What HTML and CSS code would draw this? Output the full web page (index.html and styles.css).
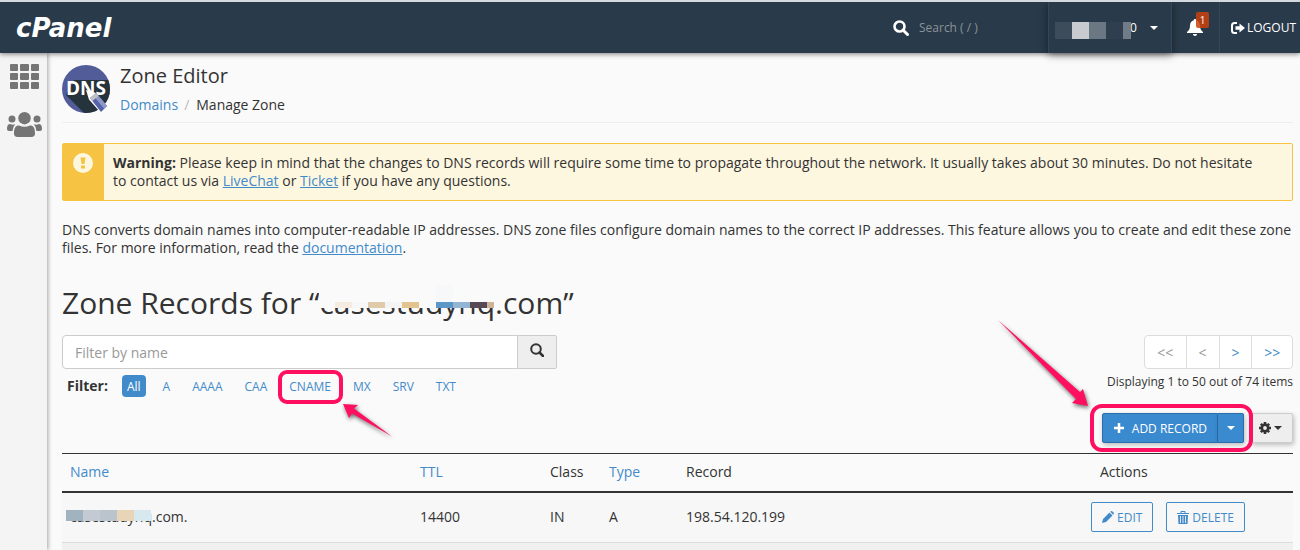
FILE: index.html
```html
<!DOCTYPE html>
<html lang="en">

<head>
    <meta charset="utf-8">
    <title>cPanel - Zone Editor</title>
    <link rel="stylesheet" href="styles.css">
</head>

<body>
    <header class="topbar">
        <a class="logo" href="#">cPanel</a>
        <label class="quick-search">
            <svg width="16" height="16" viewBox="0 0 16 16" aria-label="Search"><circle cx="6.5" cy="6.5" r="5" fill="none" stroke="#fff" stroke-width="2.6"/><path d="M10 10l4.500 4.500" stroke="#fff" stroke-width="3" stroke-linecap="round"/></svg>
            <input type="text" placeholder="Search ( / )">
        </label>
        <button class="user-menu" type="button">
            <span class="user-name"><span class="user-mask"><i></i><i></i><i></i><i></i><i></i></span></span><span>0</span>
            <i class="caret"></i>
        </button>
        <a class="bell" href="#" aria-label="Notifications">
            <svg width="16" height="17" viewBox="0 0 16 17" fill="#fff"><path d="M8 0c.8 0 1.200.5 1.200 1.200C11.800 1.800 13 4 13 6.500c0 3.500 1 5 3 6.500v1H0v-1c2-1.500 3-3 3-6.500C3 4 4.200 1.800 6.800 1.200 6.800.5 7.200 0 8 0z"/><path d="M6 15h4c0 1-.9 2-2 2s-2-1-2-2z"/></svg>
            <span class="badge">1</span>
        </a>
        <a class="logout" href="#">
            <svg width="14" height="12" viewBox="0 0 14 12"><path d="M6 1H3.500Q1 1 1 3.500v5Q1 11 3.500 11H6" fill="none" stroke="#fff" stroke-width="2"/><path d="M4.500 4.300H8.500V1.500L14 6 8.500 10.500V7.700H4.500z" fill="#fff"/></svg>
            LOGOUT
        </a>
    </header>

    <div class="page">
        <nav class="sidebar">
            <a href="#" aria-label="Home">
                <svg width="29" height="25" viewBox="0 0 29 25" fill="#757575"><rect width="8" height="7" rx="1"/><rect x="10" width="9" height="7" rx="1"/><rect x="21" width="8" height="7" rx="1"/><rect y="9" width="8" height="7" rx="1"/><rect x="10" y="9" width="9" height="7" rx="1"/><rect x="21" y="9" width="8" height="7" rx="1"/><rect y="18" width="8" height="7" rx="1"/><rect x="10" y="18" width="9" height="7" rx="1"/><rect x="21" y="18" width="8" height="7" rx="1"/></svg>
            </a>
            <a href="#" aria-label="User Manager">
                <svg width="35" height="25" viewBox="0 0 35 25" fill="#757575"><circle cx="17.500" cy="6.200" r="6.200"/><circle cx="5" cy="7" r="3.500"/><circle cx="30" cy="7" r="3.500"/><path d="M7 21.500C7 16 8.500 13.500 12 13.500q5.500 2.500 11 0c3.500 0 5 2.500 5 8 0 2.200-1.200 3.500-3.500 3.500h-14C8.200 25 7 23.700 7 21.500z"/><path d="M0 17c0-3.500 1-5 3.200-5q2.300 1.200 5 .3Q5.800 15 5.500 19H2Q0 19 0 17zM35 17c0-3.500-1-5-3.200-5q-2.300 1.200-5 .3Q29.200 15 29.500 19H33q2 0 2-2z"/></svg>
            </a>
        </nav>

        <main class="content">
            <div class="page-header">
                <svg class="app-icon" width="48" height="48" viewBox="0 0 48 48">
                    <clipPath id="disc"><circle cx="24" cy="24" r="24"/></clipPath>
                    <g clip-path="url(#disc)">
                        <rect width="48" height="48" fill="#515c99"/>
                        <path d="M4 30L12 15h36v33H22z" fill="#25333c"/>
                    </g>
                    <text x="24" y="30" text-anchor="middle" class="app-icon-text">DNS</text>
                    <path d="M24 25l10 3 11 13-7 6-11-12.500z" fill="#fff"/>
                    <path d="M28 33l6-5 11 13-6 6z" fill="#5662a8"/>
                    <path d="M31 30.500l3-2.500 11 13-3 2.500z" fill="#8d97cb"/>
                    <path d="M28 33l6-5 2.500 3-6 5z" fill="#bfc1c3"/>
                </svg>
                <div>
                    <h1>Zone Editor</h1>
                    <div class="breadcrumb"><a href="#">Domains</a><span>/</span>Manage Zone</div>
                </div>
            </div>

            <div class="alert">
                <div class="alert-icon">
                    <svg width="20" height="20" viewBox="0 0 20 20"><circle cx="10" cy="10" r="10" fill="#fef7e0"/><path d="M7.500 4.500h5l-1 6.500H8.500zM8 12.500h4v3H8z" fill="#f6c342"/></svg>
                </div>
                <p><strong>Warning:</strong> Please keep in mind that the changes to DNS records will require some time to propagate throughout the network. It usually takes about 30 minutes. Do not hesitate to contact us via <a href="#">LiveChat</a> or <a href="#">Ticket</a> if you have any questions.</p>
            </div>

            <p class="intro">DNS converts domain names into computer-readable IP addresses. DNS zone files configure domain names to the correct IP addresses. This feature allows you to create and edit these zone files. For more information, read the <a href="#">documentation</a>.</p>

            <h2>Zone Records for “<span class="masked">casestudyhq<svg class="title-mask" width="176" height="23" viewBox="0 0 176 23" aria-hidden="true"><rect width="176" height="23" fill="#fafafa"/><rect x="16" y="17" width="17" height="6" fill="#f5ebe0"/><rect x="33" y="17" width="16" height="6" fill="#f7f7f7"/><rect x="49" y="17" width="17" height="6" fill="#dfcbaa"/><rect x="66" y="17" width="17" height="6" fill="#f4f4f4"/><rect x="83" y="17" width="17" height="6" fill="#e3c48f"/><rect x="117" width="17" height="17" fill="#f6f8fa"/><rect x="117" y="17" width="17" height="6" fill="#5b97c7"/><rect x="134" y="17" width="17" height="6" fill="#92b5d3"/><rect x="151" y="17" width="17" height="6" fill="#584a55"/><rect x="168" y="17" width="7" height="6" fill="#ceb398"/></svg></span>.com”</h2>

            <div class="toolbar">
                <div>
                    <div class="search-group">
                        <input type="text" placeholder="Filter by name" aria-label="Filter by name">
                        <button type="button" aria-label="Search">
                            <svg width="14" height="14" viewBox="0 0 14 14" fill="none" stroke="#333"><circle cx="6" cy="6" r="4.800" stroke-width="2"/><path d="M9.500 9.500l3.500 3.500" stroke-width="2.500" stroke-linecap="round"/></svg>
                        </button>
                    </div>
                    <div class="filters">
                        <strong>Filter:</strong>
                        <button type="button" class="active">All</button>
                        <button type="button">A</button>
                        <button type="button">AAAA</button>
                        <button type="button">CAA</button>
                        <button type="button" class="marked">CNAME
                            <svg class="arrow-small" width="54" height="40" viewBox="0 0 54 40"><path d="M1 1l15 1-4 3.500L50 33.500 10 10.500 7 15z" fill="#ff0f5f"/></svg>
                        </button>
                        <button type="button">MX</button>
                        <button type="button">SRV</button>
                        <button type="button">TXT</button>
                    </div>
                </div>
                <div class="paging">
                    <div class="pager">
                        <button type="button" disabled>&lt;&lt;</button>
                        <button type="button" disabled>&lt;</button>
                        <button type="button">&gt;</button>
                        <button type="button">&gt;&gt;</button>
                    </div>
                    <div class="count">Displaying 1 to 50 out of 74 items</div>
                </div>
            </div>

            <div class="actions-bar">
                <div class="add-group">
                    <button type="button" class="add"><svg width="12" height="12" viewBox="0 0 12 12"><path d="M6 1v10M1 6h10" stroke="#fff" stroke-width="2.500"/></svg>ADD RECORD</button>
                    <button type="button" class="add-toggle" aria-label="More record types"><i class="caret"></i></button>
                    <svg class="arrow-large" width="96" height="92" viewBox="0 0 96 92"><path d="M1 0L83 72l3-3 5 17-16-3 4-4z" fill="#ff0f5f"/></svg>
                </div>
                <button type="button" class="settings" aria-label="Settings">
                    <svg width="12" height="12" viewBox="0 0 12 12"><circle cx="6" cy="6" r="3.200" fill="none" stroke="#333" stroke-width="2.600"/><path d="M6 0v2M6 10v2M0 6h2M10 6h2M1.800 1.800l1.400 1.400M8.800 8.800l1.400 1.400M1.800 10.200l1.400-1.400M8.800 3.200l1.400-1.400" stroke="#333" stroke-width="2.600"/></svg>
                    <i class="caret"></i>
                </button>
            </div>

            <table class="records">
                <thead>
                    <tr>
                        <th class="col-name"><a href="#">Name</a></th>
                        <th class="col-ttl"><a href="#">TTL</a></th>
                        <th class="col-class">Class</th>
                        <th class="col-type"><a href="#">Type</a></th>
                        <th>Record</th>
                        <th class="col-actions">Actions</th>
                    </tr>
                </thead>
                <tbody>
                    <tr>
                        <td><span class="masked">casestudyhq<span class="row-mask"><i></i><i></i><i></i><i></i><i></i></span></span>.com.</td>
                        <td>14400</td>
                        <td>IN</td>
                        <td>A</td>
                        <td>198.54.120.199</td>
                        <td>
                            <div class="row-actions">
                                <button type="button"><svg width="12" height="12" viewBox="0 0 12 12" fill="#428bca"><path d="M0 12l1-4 6.500-6.500 3 3L4 11zM8.300.8L9 .2q.6-.4 1.200.1l1.500 1.500q.5.600 0 1.200l-.6.700z"/></svg>EDIT</button>
                                <button type="button"><svg width="12" height="13" viewBox="0 0 12 13"><path d="M4 2V.5h4V2M0 2.500h12" fill="none" stroke="#428bca"/><path d="M1 4h10l-.5 9h-9z" fill="#428bca"/><path d="M3.500 5v7M6 5v7M8.500 5v7" stroke="#dfe6f2"/></svg>DELETE</button>
                            </div>
                        </td>
                    </tr>
                </tbody>
            </table>
            <div class="next-row"></div>
        </main>
    </div>
</body>

</html>
```

FILE: styles.css
```css
* {
  box-sizing: border-box;
}

body {
  margin: 0;
  height: 100vh;
  overflow: hidden;
  display: flex;
  flex-direction: column;
  border-top: 2px solid #d3d9de;
  background: #fafafa;
  color: #333;
  font-family: "Open Sans", sans-serif;
  font-size: 14px;
  line-height: 18px;
}

a {
  color: #428bca;
  text-decoration: none;
}

p,
h1,
h2 {
  margin: 0;
  font-weight: 400;
}

button,
input {
  font-family: inherit;
  color: inherit;
}

button {
  padding: 0;
  border: 0;
  background: none;
}

svg {
  flex: none;
}

.caret {
  border: 4px solid transparent;
  border-top-color: currentColor;
  border-bottom: 0;
}

/* Top bar */
.topbar {
  display: flex;
  align-items: center;
  flex: none;
  height: 51px;
  position: relative;
  background: #293a4a;
  color: #fff;
  box-shadow: 0 1px 5px rgba(0, 0, 0, 0.5);
}

.logo {
  margin-left: 16px;
  color: #fff;
  font: italic bold 26px "DejaVu Sans", sans-serif;
}

.quick-search {
  display: flex;
  align-items: center;
  gap: 10px;
  margin-left: auto;
}

.quick-search input {
  width: 129px;
  padding: 0;
  border: 0;
  background: none;
  font-size: 12px;
}

.quick-search input::placeholder {
  color: #8b9299;
}

.user-menu {
  display: flex;
  align-items: center;
  align-self: stretch;
  width: 124px;
  padding-left: 14px;
  border: solid #34475a;
  border-width: 0 1px;
  box-shadow: 0 2px 8px rgba(0, 0, 0, 0.45);
  font-size: 12px;
}

.user-name {
  position: relative;
  width: 67px;
  height: 12px;
}

.user-mask {
  display: flex;
  position: absolute;
  top: 0;
  left: -8px;
}

.user-mask i {
  width: 17px;
  height: 17px;
  background: #3d4c5b;
}

.user-mask i:nth-child(2) { background: #c8ccd1; }
.user-mask i:nth-child(3) { background: #6b7783; }
.user-mask i:nth-child(4) { background: #2f3f50; }
.user-mask i:nth-child(5) { width: 8px; background: #717c88; }

.user-menu .caret {
  margin-left: 13px;
}

.bell {
  display: flex;
  align-items: center;
  justify-content: center;
  position: relative;
  align-self: stretch;
  width: 48px;
  border-right: 1px solid #34475a;
}

.badge {
  position: absolute;
  top: 10px;
  right: 10px;
  width: 13px;
  border-radius: 2px;
  background: rgba(203, 66, 11, 0.85);
  color: #fff;
  font-size: 10px;
  line-height: 16px;
  text-align: center;
}

.logout {
  display: flex;
  align-items: center;
  gap: 2px;
  padding: 0 4px 0 11px;
  color: #fff;
  font-size: 12px;
}

/* Layout */
.page {
  display: flex;
  flex: 1;
  min-height: 0;
}

.sidebar {
  display: flex;
  flex-direction: column;
  align-items: center;
  gap: 23px;
  width: 47px;
  padding: 11px 0 0 2px;
  background: #f4f4f4;
  box-shadow: 1px 0 4px rgba(0, 0, 0, 0.35);
}

.sidebar svg {
  display: block;
}

.content {
  display: flex;
  flex-direction: column;
  flex: 1;
  padding: 0 7px 0 15px;
}

.page-header {
  display: flex;
  gap: 10px;
  height: 70px;
  padding-top: 12px;
  border-bottom: 1px solid #eee;
}

.app-icon-text {
  fill: #fff;
  font-size: 19px;
  font-weight: 700;
}

.page-header h1 {
  font-size: 20px;
  line-height: 22px;
}

.breadcrumb {
  margin-top: 9px;
}

.breadcrumb span {
  padding: 0 7px 0 6px;
  color: #bbb;
}

.alert {
  display: flex;
  margin: 20px 0;
  border: 1px solid #f6c342;
  border-radius: 2px;
  background: #fef7e0;
}

.alert-icon {
  flex: none;
  width: 41px;
  padding: 9px 10px;
  background: #f6c342;
}

.alert p {
  padding: 10px 36px 10px 9px;
}

.alert a,
.intro a {
  text-decoration: underline;
}

.content h2 {
  margin: 29px 0 15px;
  font-size: 30px;
  line-height: 34px;
}

.masked {
  position: relative;
}

/* Blocks that hide the domain name */
.title-mask {
  position: absolute;
  top: 3px;
  left: 0;
}

.row-mask {
  display: flex;
  position: absolute;
  top: 3px;
  left: -4px;
}

.row-mask i {
  width: 17px;
  height: 11px;
  background: #a1b3bf;
}

.row-mask i:nth-child(2) { background: #c4cad4; }
.row-mask i:nth-child(3) { background: #b9c4cd; }
.row-mask i:nth-child(4) { background: #e8d5b8; }
.row-mask i:nth-child(5) { background: #d7e8ef; }

/* Search, filters and paging */
.toolbar {
  display: flex;
  justify-content: space-between;
}

.search-group {
  display: flex;
  width: 495px;
  height: 34px;
}

.search-group input {
  flex: 1;
  padding: 0 12px;
  border: 1px solid #ccc;
  border-radius: 4px 0 0 4px;
  background: #fff;
  font-size: 14px;
}

.search-group input::placeholder {
  color: #999;
}

.search-group button {
  width: 39px;
  border: 1px solid #ccc;
  border-left: 0;
  border-radius: 0 2px 2px 0;
  background: #eee;
}

.filters {
  display: flex;
  align-items: center;
  gap: 12px;
  margin-top: 6px;
  padding-left: 5px;
}

.filters strong {
  margin-right: 2px;
}

.filters button {
  padding: 1px 5px 0;
  border-radius: 4px;
  color: #428bca;
  font-size: 12px;
  line-height: 21px;
}

.filters .active {
  background: #428bca;
  color: #fff;
}

.filters .marked {
  position: relative;
}

.marked::before,
.add-group::before {
  content: "";
  position: absolute;
  inset: -5px -7px -7px -6px;
  border: 4px solid #ff0f5f;
  border-radius: 9px;
  pointer-events: none;
}

.arrow-small,
.arrow-large {
  position: absolute;
  filter: drop-shadow(1px 2px 2px rgba(0, 0, 0, 0.6));
}

.arrow-small {
  top: 28px;
  left: 58px;
}

.paging {
  text-align: right;
}

.pager {
  display: flex;
  width: 149px;
  height: 34px;
  margin-left: auto;
  border: 1px solid #ddd;
  border-radius: 4px;
  background: #fff;
}

.pager button {
  flex: 1 1 33px;
  border-left: 1px solid #ddd;
  color: #428bca;
  font-size: 14px;
}

.pager button:first-child,
.pager button:last-child {
  flex-basis: 41px;
}

.pager button:first-child {
  border-left: 0;
}

.pager button:disabled {
  color: #999;
}

.count {
  margin-top: 4px;
  font-size: 12px;
}

.actions-bar {
  display: flex;
  justify-content: flex-end;
  gap: 7px;
  height: 30px;
  margin: 16px 0 10px;
}

.add-group {
  display: flex;
  position: relative;
  z-index: 1;
}

.add-group::before {
  inset: -9px -9px -9px -12px;
  border-radius: 12px;
}

.add-group button {
  border: 1px solid #2a6dad;
  background: #3a8ad0;
  color: #fff;
  font-size: 12px;
}

.add-group .add {
  display: flex;
  align-items: center;
  gap: 7px;
  padding: 0 10px;
  border-radius: 2px 0 0 2px;
}

.add-group .add-toggle {
  display: flex;
  align-items: center;
  justify-content: center;
  width: 26px;
  border-left: 0;
  border-radius: 0 2px 2px 0;
}

.arrow-large {
  top: -93px;
  left: -105px;
}

.settings {
  display: flex;
  align-items: center;
  justify-content: center;
  gap: 3px;
  width: 42px;
  padding-right: 4px;
  border: 1px solid #ccc;
  border-radius: 2px;
  background: #eee;
}

.settings,
.add-group button {
  box-shadow: 1px 2px 5px rgba(0, 0, 0, 0.25);
}

/* Records */
.records {
  width: 100%;
  table-layout: fixed;
  border-collapse: collapse;
}

.records th {
  height: 38px;
  padding: 0 8px;
  border-top: 1px solid #333;
  border-bottom: 2px solid #333;
  font-weight: 400;
  text-align: left;
}

.records td {
  height: 51px;
  padding: 0 8px;
  border-bottom: 1px solid #ddd;
  background: #f7f7f7;
}

.records .col-name { width: 350px; }
.records .col-ttl { width: 130px; }
.records .col-class { width: 59px; }
.records .col-type { width: 77px; }
.records .col-actions { width: 210px; padding-left: 17px; }

.row-actions {
  display: flex;
  gap: 13px;
}

.row-actions button {
  display: flex;
  align-items: center;
  gap: 3px;
  height: 30px;
  padding: 0 10px;
  border: 1px solid #428bca;
  border-radius: 2px;
  color: #428bca;
  font-size: 12px;
}

.next-row {
  flex: 1;
  background: #f0f0f0;
}
```
